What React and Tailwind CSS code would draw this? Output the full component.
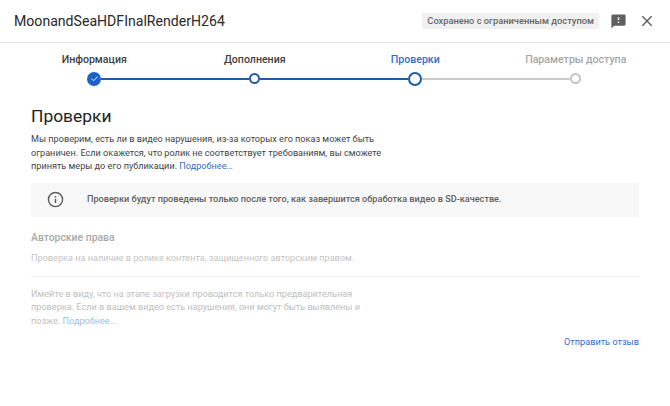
function Dot({ className, children }) {
  return <div className={`shrink-0 rounded-full box-border ${className}`}>{children}</div>;
}

export default function App() {
  return (
    <div className="w-[670px] h-[406px] bg-white overflow-hidden font-['Roboto',sans-serif]">
      <header className="h-[43px] border-b border-[#e6e6e6] flex items-center pl-[14px] pr-[15px]">
        <h1 className="text-[14.1px] font-normal text-[#282828] leading-[20px] flex-1">MoonandSeaHDFInalRenderH264</h1>
        <div className="h-[16px] px-[5px] bg-[#f1f1f1] flex items-center text-[9.300px] font-medium text-[#666666] whitespace-nowrap">
          Сохранено с ограниченным доступом
        </div>
        <svg className="ml-[11px]" width="17" height="17" viewBox="0 0 24 24" fill="#606060">
          <path d="M20 2H4c-1.100 0-2 .9-2 2v18l4-4h14c1.100 0 2-.9 2-2V4c0-1.100-.9-2-2-2zm-7 12h-2v-2h2v2zm0-4h-2V6h2v4z" />
        </svg>
        <svg className="ml-[12px]" width="16" height="16" viewBox="0 0 24 24" fill="none" stroke="#606060" strokeWidth="2.100">
          <path d="M5 5l14 14M19 5L5 19" />
        </svg>
      </header>

      <div className="pl-[14px] pt-[10px]">
        <div className="grid grid-cols-[160.500px_160.500px_160.500px_160.500px] text-[10.600px] leading-[14px] font-medium text-center">
          <div className="text-[#3f3f3f]">Информация</div>
          <div className="text-[#3f3f3f]">Дополнения</div>
          <div className="text-[#2f6fcb]">Проверки</div>
          <div className="text-[#a6a6a6]">Параметры доступа</div>
        </div>
        <div className="flex items-center ml-[73px] w-[509px] mt-[4px] h-[15px]">
          <Dot className="w-[14px] h-[14px] bg-[#1a62c4] flex items-center justify-center">
            <svg width="9" height="9" viewBox="0 0 24 24" fill="none" stroke="#ffffff" strokeWidth="2.500">
              <path d="M4 12.500l5.500 5.500L20 7" />
            </svg>
          </Dot>
          <div className="w-[148px] h-[2px] bg-[#1c5da8]" />
          <Dot className="w-[11px] h-[11px] border-[2px] border-[#1a5cab] bg-white" />
          <div className="w-[148px] h-[2px] bg-[#1c5da8]" />
          <Dot className="w-[14px] h-[14px] border-[2px] border-[#1a5cab] bg-white" />
          <div className="w-[148px] h-[2px] bg-[#c9c9c9]" />
          <Dot className="w-[11px] h-[11px] border-[2px] border-[#c4c4c4] bg-white" />
        </div>
      </div>

      <main className="pl-[31px] pr-[31px] pt-[18px]">
        <h2 className="text-[17.400px] leading-[24px] font-normal text-[#212121]">Проверки</h2>
        <p className="mt-[5px] text-[9.150px] leading-[13.600px] text-[#444444] w-[352px]">
          Мы проверим, есть ли в видео нарушения, из-за которых его показ может быть ограничен. Если окажется, что ролик не соответствует требованиям, вы сможете принять меры до его публикации.{" "}
          <span className="text-[#2f6fcb]">Подробнее…</span>
        </p>

        <div className="mt-[9px] h-[34px] bg-[#f8f8f8] flex items-center">
          <svg className="ml-[16px]" width="17" height="17" viewBox="0 0 24 24" fill="none" stroke="#5a5a5a" strokeWidth="2">
            <circle cx="12" cy="12" r="10" />
            <path d="M12 11v6M12 7v2" />
          </svg>
          <span className="ml-[23px] text-[9.150px] font-medium text-[#606060]">
            Проверки будут проведены только после того, как завершится обработка видео в SD-качестве.
          </span>
        </div>

        <h3 className="mt-[14px] text-[10.400px] leading-[14px] font-medium text-[#a8a8a8]">Авторские права</h3>
        <p className="mt-[6px] text-[9.150px] leading-[14px] text-[#c4c4c4]">
          Проверка на наличие в ролике контента, защищенного авторским правом.
        </p>
        <div className="mt-[11px] h-px bg-[#efefef]" />
        <p className="mt-[11px] text-[9.150px] leading-[13.600px] text-[#c0c0c0] w-[340px]">
          Имейте в виду, что на этапе загрузки проводится только предварительная проверка. Если в вашем видео есть нарушения, они могут быть выявлены и позже.{" "}
          <span className="text-[#9dbfec]">Подробнее…</span>
        </p>
        <div className="mt-[6px] text-right text-[9.200px] leading-[14px] text-[#2f6fcb]">Отправить отзыв</div>
      </main>
    </div>
  );
}
